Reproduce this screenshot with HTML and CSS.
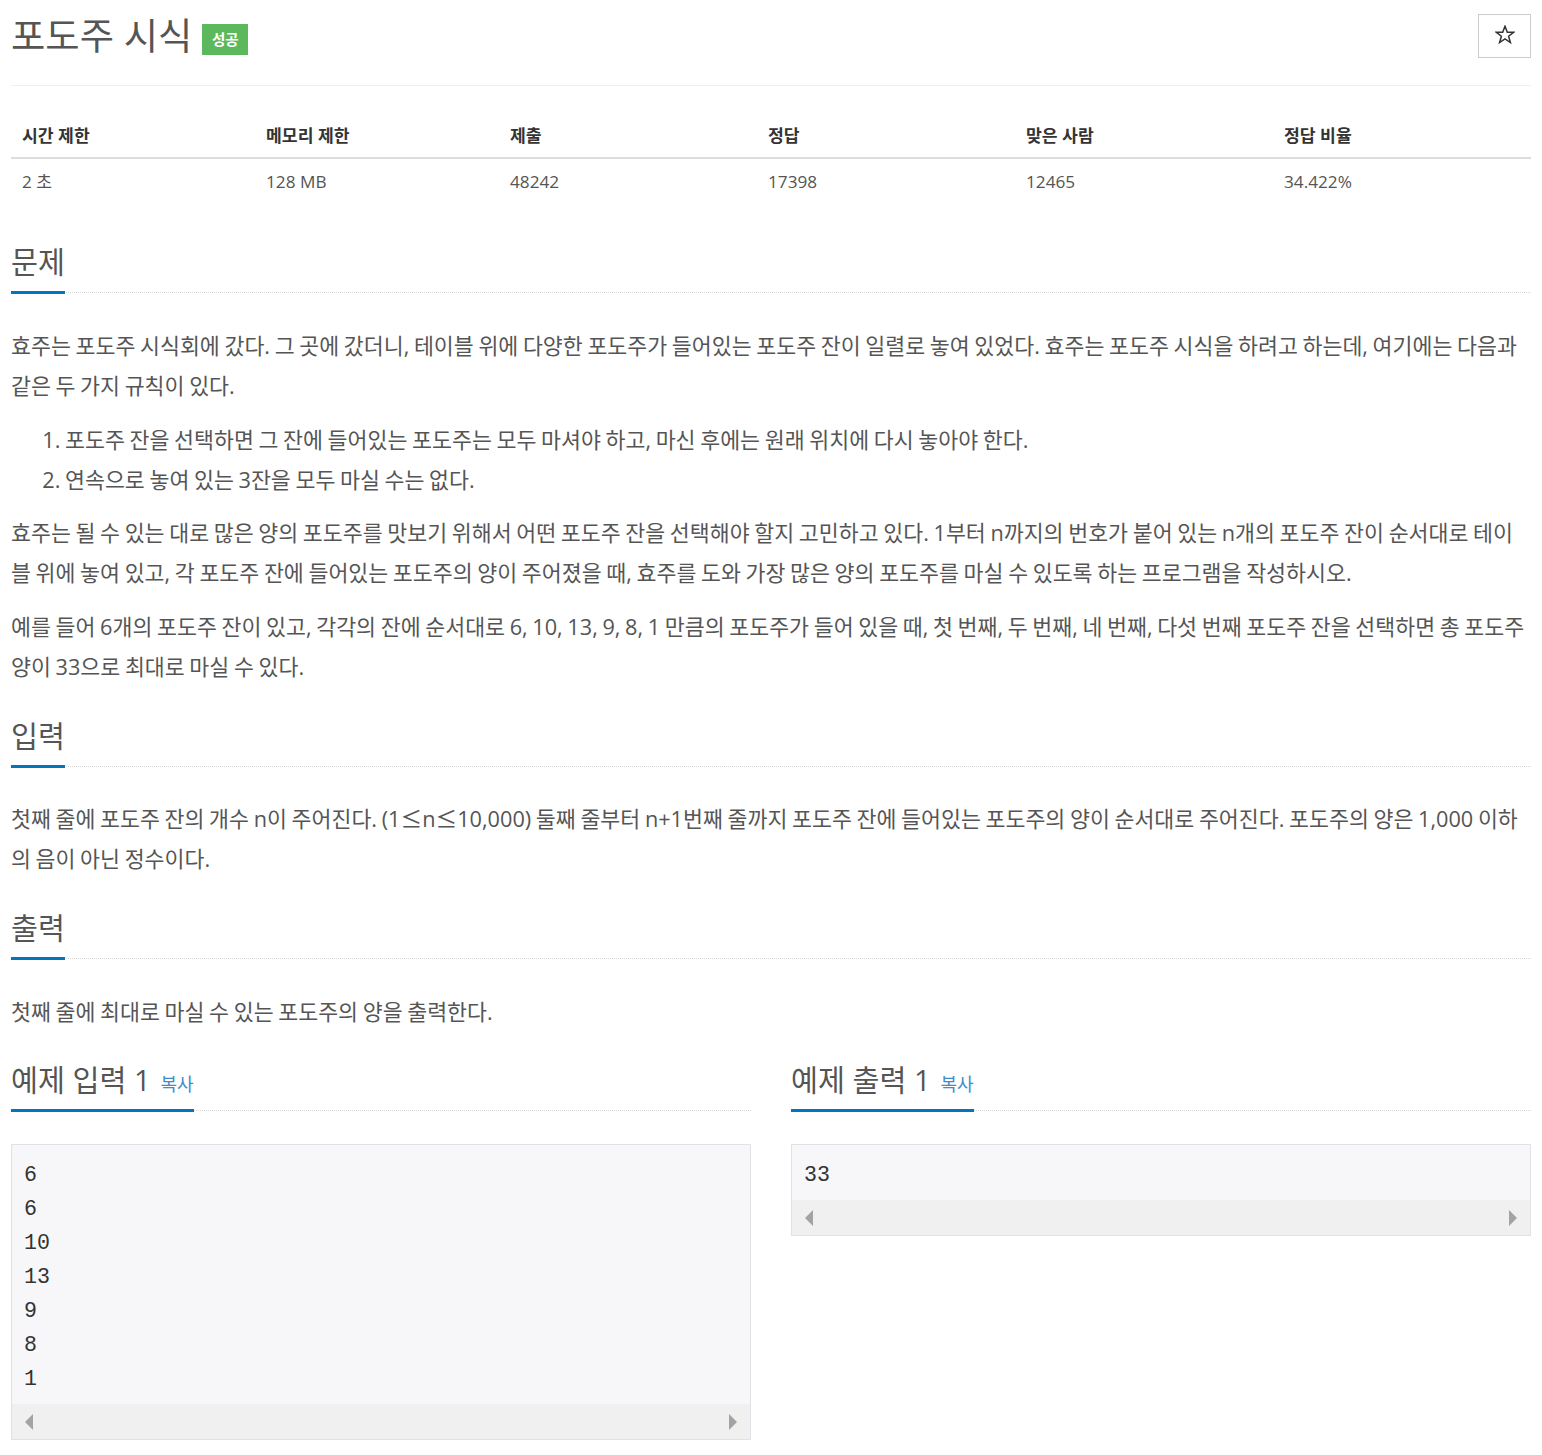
FILE: index.html
```html
<!DOCTYPE html>
<html lang="ko">
<head>
<meta charset="utf-8">
<title>포도주 시식</title>
<link rel="stylesheet" href="styles.css">
</head>
<body>
<div class="page">
  <div class="title-bar">
    <h1 class="title">포도주 시식 <span class="badge">성공</span></h1>
    <button class="star-btn" type="button" aria-label="즐겨찾기">
      <svg class="star" width="20" height="19" viewBox="0 0 20 19"><polygon points="10,1.2 12.3,7.2 18.6,7.3 13.6,11.2 15.4,17.5 10,13.8 4.6,17.5 6.4,11.2 1.4,7.3 7.7,7.2" fill="none" stroke="#333" stroke-width="1.5" stroke-linejoin="miter"/></svg>
    </button>
  </div>

  <table class="info">
    <thead>
      <tr>
        <th class="w1">시간 제한</th>
        <th class="w1">메모리 제한</th>
        <th class="w2">제출</th>
        <th class="w2">정답</th>
        <th class="w2">맞은 사람</th>
        <th class="w2">정답 비율</th>
      </tr>
    </thead>
    <tbody>
      <tr>
        <td>2 초</td>
        <td>128 MB</td>
        <td>48242</td>
        <td>17398</td>
        <td>12465</td>
        <td>34.422%</td>
      </tr>
    </tbody>
  </table>

  <section class="section first">
    <div class="headline"><h2>문제</h2></div>
    <div class="text">
      <p>효주는 포도주 시식회에 갔다. 그 곳에 갔더니, 테이블 위에 다양한 포도주가 들어있는 포도주 잔이 일렬로 놓여 있었다. 효주는 포도주 시식을 하려고 하는데, 여기에는 다음과 같은 두 가지 규칙이 있다.</p>
      <ol>
        <li>포도주 잔을 선택하면 그 잔에 들어있는 포도주는 모두 마셔야 하고, 마신 후에는 원래 위치에 다시 놓아야 한다.</li>
        <li>연속으로 놓여 있는 3잔을 모두 마실 수는 없다.</li>
      </ol>
      <p>효주는 될 수 있는 대로 많은 양의 포도주를 맛보기 위해서 어떤 포도주 잔을 선택해야 할지 고민하고 있다. 1부터 n까지의 번호가 붙어 있는 n개의 포도주 잔이 순서대로 테이블 위에 놓여 있고, 각 포도주 잔에 들어있는 포도주의 양이 주어졌을 때, 효주를 도와 가장 많은 양의 포도주를 마실 수 있도록 하는 프로그램을 작성하시오.</p>
      <p>예를 들어 6개의 포도주 잔이 있고, 각각의 잔에 순서대로 6, 10, 13, 9, 8, 1 만큼의 포도주가 들어 있을 때, 첫 번째, 두 번째, 네 번째, 다섯 번째 포도주 잔을 선택하면 총 포도주 양이 33으로 최대로 마실 수 있다.</p>
    </div>
  </section>

  <section class="section">
    <div class="headline"><h2>입력</h2></div>
    <div class="text tight">
      <p>첫째 줄에 포도주 잔의 개수 n이 주어진다. (1<span class="sym">≤</span>n<span class="sym">≤</span>10,000) 둘째 줄부터 n+1번째 줄까지 포도주 잔에 들어있는 포도주의 양이 순서대로 주어진다. 포도주의 양은 1,000 이하의 음이 아닌 정수이다.</p>
    </div>
  </section>

  <section class="section">
    <div class="headline"><h2>출력</h2></div>
    <div class="text">
      <p>첫째 줄에 최대로 마실 수 있는 포도주의 양을 출력한다.</p>
    </div>
  </section>

  <div class="samples">
    <section class="sample">
      <div class="headline"><h2>예제 입력 1 <a class="copy" href="#">복사</a></h2></div>
      <div class="pre-box">
        <pre class="code">6
6
10
13
9
8
1</pre>
        <div class="hscroll"><span class="arr left"></span><span class="arr right"></span></div>
      </div>
    </section>
    <section class="sample">
      <div class="headline"><h2>예제 출력 1 <a class="copy" href="#">복사</a></h2></div>
      <div class="pre-box">
        <pre class="code">33</pre>
        <div class="hscroll"><span class="arr left"></span><span class="arr right"></span></div>
      </div>
    </section>
  </div>
</div>
</body>
</html>
```

FILE: styles.css
```css
html, body {
  margin: 0;
  padding: 0;
  background: #fff;
}

body {
  font-family: "Open Sans", "Noto Sans CJK KR", sans-serif;
  color: #555;
}

*, *::before, *::after {
  box-sizing: border-box;
}

.page {
  padding: 0 11px;
  width: 1542px;
}

.title-bar {
  display: flex;
  justify-content: space-between;
  align-items: flex-start;
  padding-top: 14px;
  padding-bottom: 27px;
  border-bottom: 1px solid #eee;
}

.title {
  margin: 0;
  font-size: 37.3px;
  font-weight: 400;
  line-height: 44px;
  color: #555;
  display: flex;
  align-items: center;
  gap: 10px;
}

.badge {
  display: inline-block;
  background: #5cb85c;
  color: #fff;
  font-size: 14.5px;
  font-weight: 700;
  line-height: 31px;
  height: 31px;
  width: 46px;
  text-align: center;
  margin-top: 7px;
}

.star-btn {
  width: 53px;
  height: 44px;
  background: #fff;
  border: 1px solid #ccc;
  border-radius: 0;
  padding: 0;
  margin: 0;
  display: flex;
  align-items: center;
  justify-content: center;
}

.star {
  display: block;
  margin-top: -3px;
}

.info {
  width: 1520px;
  border-collapse: collapse;
  margin-top: 31px;
  table-layout: fixed;
}

.info .w1 { width: 244px; }
.info .w2 { width: 258px; }

.info th {
  text-align: left;
  font-size: 17.2px;
  font-weight: 700;
  color: #333;
  line-height: 22px;
  padding: 8px 11px 10px;
  border-bottom: 2px solid #ddd;
}

.info td {
  text-align: left;
  font-size: 17.2px;
  color: #555;
  line-height: 22px;
  padding: 12px 11px 8px;
}

.section {
  margin-top: 34px;
}

.section.first {
  margin-top: 46px;
}

.headline {
  border-bottom: 1px dotted #d8d8d8;
}

.headline h2 {
  display: inline-block;
  margin: 0 0 -2px 0;
  font-size: 29.3px;
  font-weight: 400;
  line-height: 30px;
  padding-bottom: 14px;
  border-bottom: 3px solid #0076c0;
  color: #555;
  white-space: nowrap;
}

.text {
  padding-top: 33px;
  font-size: 21.7px;
  line-height: 40px;
  word-spacing: -1px;
  word-break: break-all;
}

.text.tight {
  padding-top: 32px;
}

.text p {
  margin: 0 0 14px 0;
}

.text ol {
  margin: 0 0 13px 0;
  padding-left: 54px;
}

.text .sym {
  font-family: "Noto Sans CJK KR", sans-serif;
  line-height: 0;
}

.copy {
  font-size: 18px;
  line-height: 0;
  color: #428bca;
  text-decoration: none;
  margin-left: 2px;
  word-spacing: 0;
}

.samples {
  display: grid;
  grid-template-columns: 740px 740px;
  column-gap: 40px;
  margin-top: 33px;
}

.pre-box {
  margin-top: 33px;
  border: 1px solid #e1e1e8;
  background: #f7f7f9;
}

.code {
  margin: 0;
  padding: 13px 12px 8px;
  font-family: "Liberation Mono", monospace;
  font-size: 21.6px;
  line-height: 34px;
  color: #333;
}

.hscroll {
  height: 35px;
  background: #f0f0f0;
  display: flex;
  justify-content: space-between;
  align-items: center;
  padding: 0 13px;
}

.arr {
  width: 0;
  height: 0;
  border-top: 8px solid transparent;
  border-bottom: 8px solid transparent;
}

.arr.left { border-right: 8px solid #a3a3a3; }
.arr.right { border-left: 8px solid #a3a3a3; }
```
